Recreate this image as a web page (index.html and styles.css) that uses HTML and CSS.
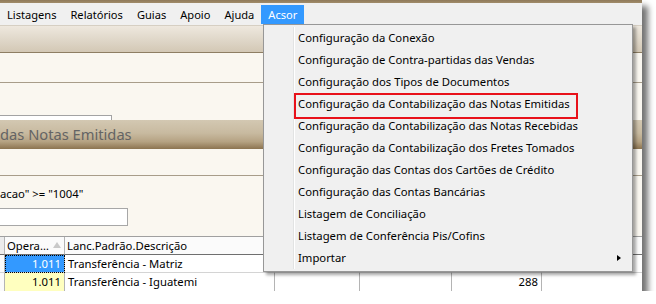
FILE: index.html
```html
<!DOCTYPE html>
<html lang="pt">
<head>
<meta charset="utf-8">
<title>Acsor</title>
<link rel="stylesheet" href="styles.css">
</head>
<body>
<div class="win">
  <div class="topstrip"></div>
  <nav class="menubar">
    <span class="mi">Listagens</span>
    <span class="mi">Relatórios</span>
    <span class="mi">Guias</span>
    <span class="mi">Apoio</span>
    <span class="mi">Ajuda</span>
    <span class="mi active">Acsor</span>
  </nav>
  <div class="bar1"></div>
  <div class="sec sec-a"></div>
  <div class="sec sec-b"><div class="stub"></div></div>
  <div class="bar2"><span class="bar2-title">das Notas Emitidas</span></div>
  <div class="sec sec-c"></div>
  <div class="sec sec-d">
    <div class="filter">acao" &gt;= "1004"</div>
    <div class="field"></div>
  </div>
  <div class="grid">
    <div class="c ind hd"></div>
    <div class="c hd">Opera… <span class="sort"></span></div>
    <div class="c hd">Lanc.Padrão.Descrição</div>
    <div class="c hd"></div>
    <div class="c hd"></div>
    <div class="c hd"></div>
    <div class="c hd last"></div>

    <div class="c ind"></div>
    <div class="c num sel">1.011</div>
    <div class="c">Transferência - Matriz</div>
    <div class="c"></div>
    <div class="c"></div>
    <div class="c"></div>
    <div class="c last"></div>

    <div class="c ind"></div>
    <div class="c num yel">1.011</div>
    <div class="c">Transferência - Iguatemi</div>
    <div class="c"></div>
    <div class="c"></div>
    <div class="c num">288</div>
    <div class="c last"></div>
  </div>

  <div class="dropdown">
    <ul class="dd-list">
      <li class="dd-item">Configuração da Conexão</li>
      <li class="dd-item">Configuração de Contra-partidas das Vendas</li>
      <li class="dd-item">Configuração dos Tipos de Documentos</li>
      <li class="dd-item marked">Configuração da Contabilização das Notas Emitidas</li>
      <li class="dd-item">Configuração da Contabilização das Notas Recebidas</li>
      <li class="dd-item">Configuração da Contabilização dos Fretes Tomados</li>
      <li class="dd-item">Configuração das Contas dos Cartões de Crédito</li>
      <li class="dd-item">Configuração das Contas Bancárias</li>
      <li class="dd-item">Listagem de Conciliação</li>
      <li class="dd-item">Listagem de Conferência Pis/Cofins</li>
      <li class="dd-item sub">Importar</li>
    </ul>
  </div>
</div>
</body>
</html>
```

FILE: styles.css
```css
* { box-sizing: border-box; }
body {
  margin: 0;
  background: #ffffff;
  font-family: "Noto Sans", "Open Sans", sans-serif;
  font-size: 11.3px;
  color: #000;
}
.win {
  position: relative;
  width: 642px;
  height: 291px;
  background: #faf7f0;
  box-shadow: 6px 6px 6px rgba(0, 0, 0, 0.55);
}
.topstrip {
  height: 3px;
  background: linear-gradient(#8f7a5a, #a08b6a);
}
.menubar {
  height: 22px;
  display: flex;
  align-items: flex-start;
  padding-top: 2px;
  background: #f0f0f0;
  font-size: 11.1px;
}
.mi {
  height: 19px;
  line-height: 19px;
  padding: 0 7px;
  white-space: nowrap;
}
.mi.active {
  background: #3399ff;
  color: #fff;
}
.bar1 {
  height: 28px;
  border-top: 1px solid #d6cfc3;
  border-bottom: 1px solid #8e7e63;
  background: linear-gradient(#eee8de, #e0d8ca 50%, #d3c8b5);
}
.sec { background: #faf7f0; }
.sec-a {
  height: 30px;
  border-bottom: 1px solid #a89d8a;
}
.sec-b {
  height: 37px;
  display: flex;
  flex-direction: column;
  justify-content: flex-end;
}
.stub {
  width: 112px;
  height: 5px;
  background: #fff;
  border-top: 1px solid #a3a3a3;
  border-right: 1px solid #a3a3a3;
}
.bar2 {
  height: 29px;
  overflow: hidden;
  background: linear-gradient(#d3c8b2, #c8baa0 45%, #b5a282 75%, #8c7450);
}
.bar2-title {
  display: block;
  margin-left: 0;
  line-height: 29px;
  font-size: 14.7px;
  color: #646464;
  white-space: nowrap;
}
.sec-c {
  height: 27px;
  border-bottom: 1px solid #a89d8a;
}
.sec-d {
  height: 60px;
  padding-top: 10px;
}
.filter {
  height: 16px;
  line-height: 16px;
  white-space: nowrap;
}
.field {
  margin-top: 6px;
  width: 128px;
  height: 18px;
  background: #fff;
  border: 1px solid #a7a7a7;
  border-left: none;
}
.grid {
  display: grid;
  grid-template-columns: 5px 60px 210px 85px 92px 90px 100px;
  grid-template-rows: 18px 18px 19px;
  border-top: 1px solid #a0a0a0;
  background: #fff;
}
.c {
  border-right: 1px solid #b4b4b4;
  border-bottom: 1px solid #d4d4d4;
  padding: 0 3px;
  line-height: 17px;
  white-space: nowrap;
  overflow: hidden;
}
.c.last { border-right: none; }
.c.hd {
  background: #fbfbfb;
  border-bottom: 1px solid #6f6f6f;
  padding-left: 2px;
  position: relative;
}
.c.ind { padding: 0; background: #fbfbfb; }
.c.ind.hd { background: #ececec; }
.sort {
  position: absolute;
  right: 3px;
  top: 5px;
  width: 0;
  height: 0;
  border-left: 4px solid transparent;
  border-right: 4px solid transparent;
  border-bottom: 6px solid #c9c9c9;
}
.num { text-align: right; padding-right: 3px; }
.sel {
  background: #3399ff;
  color: #fff;
  outline: 1px dotted #000;
  outline-offset: -1px;
}
.yel { background: #ffffbf; }

.dropdown {
  position: absolute;
  left: 263px;
  top: 24px;
  width: 370px;
  height: 248px;
  padding: 2px;
  background: #f0f0f0;
  border: 1px solid #979797;
  box-shadow: 3px 3px 3px rgba(0, 0, 0, 0.35);
}
.dd-list {
  list-style: none;
  margin: 0;
  padding: 0;
  background: linear-gradient(to right, transparent 27px, #e2e3e3 27px, #e2e3e3 28px, #ffffff 28px, #ffffff 29px, transparent 29px);
}
.dd-item {
  position: relative;
  height: 22px;
  line-height: 22px;
  padding-left: 32px;
  white-space: nowrap;
}
.dd-item.marked::after {
  content: "";
  position: absolute;
  left: 28px;
  top: 0;
  width: 280px;
  height: 22px;
  border: 2px solid #e8111a;
}
.dd-item.sub::after {
  content: "";
  position: absolute;
  left: 351px;
  top: 8px;
  width: 0;
  height: 0;
  border-top: 3.5px solid transparent;
  border-bottom: 3.5px solid transparent;
  border-left: 4px solid #000;
}
```
